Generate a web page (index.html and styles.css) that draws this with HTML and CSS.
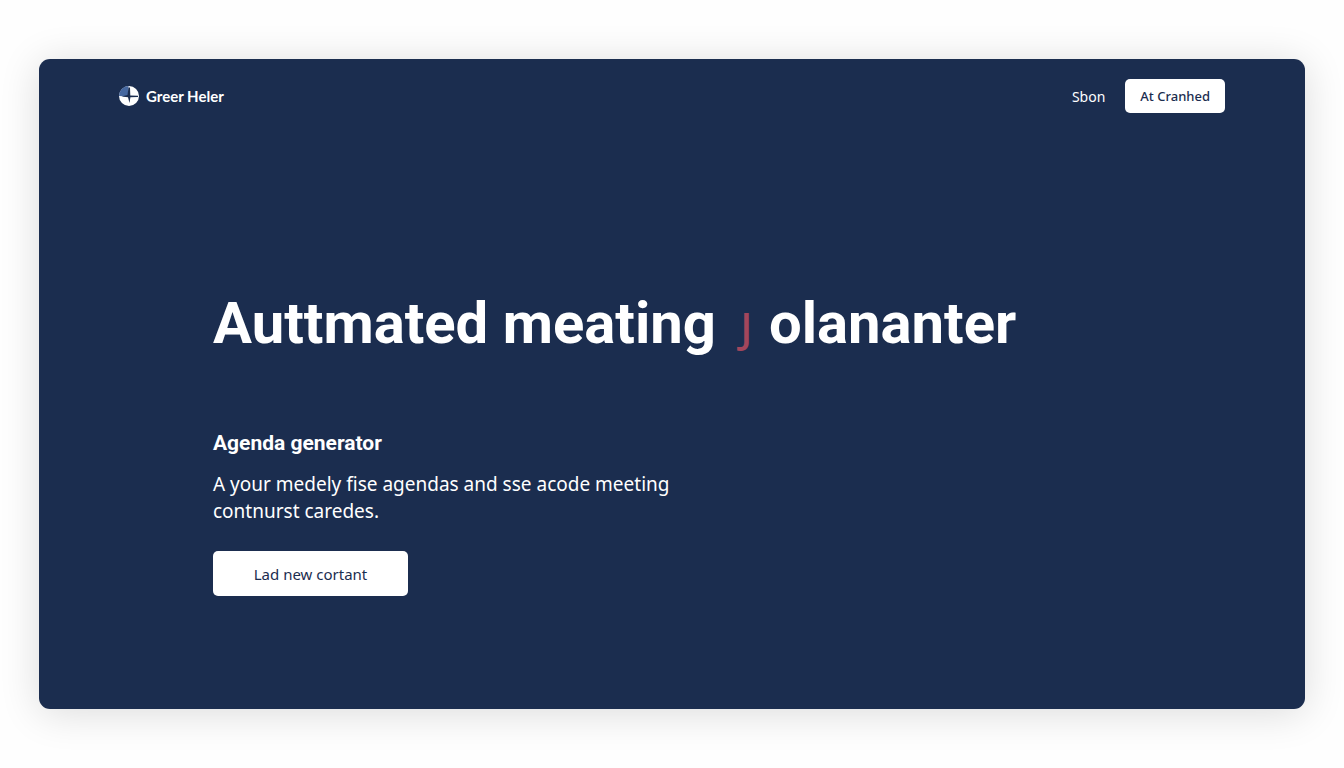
FILE: index.html
```
<!DOCTYPE html>
<html lang="en">
<head>
  <meta charset="UTF-8">
  <meta name="viewport" content="width=device-width, initial-scale=1.0">
  <title>Greer Heler</title>
  <link rel="stylesheet" href="styles.css">
</head>
<body>

  <div class="page-card">
    <header>
      <a class="logo" href="#">
        <svg class="logo-mark" viewBox="0 0 20 20" aria-hidden="true">
          <circle cx="10" cy="10" r="10" fill="#ffffff"/>
          <path d="M9.500 10.500V0A10 10 0 0 0 0 10Z" fill="#4668a0"/>
          <path d="M9.500 1.500 11 1.500 11.300 9.400 19 9.800V10.900L11.400 11.300 10.500 17 9 11.200 2.500 10.600 8.500 9Z" fill="#1b2d4f"/>
        </svg>
        <span>Greer Heler</span>
      </a>
      <nav>
        <a class="nav-link" href="#">Sbon</a>
        <button class="nav-button" type="button">At Cranhed</button>
      </nav>
    </header>

    <main>
      <h1>Auttmated meating <span class="accent">J</span> olananter</h1>
      <section class="feature">
        <h2>Agenda generator</h2>
        <p>A your medely fise agendas and sse acode meeting contnurst caredes.</p>
        <button class="main-button" type="button">Lad new cortant</button>
      </section>
    </main>
  </div>

</body>
</html>
```
FILE: styles.css
```
* {
  box-sizing: border-box;
}

body {
  margin: 0;
  min-height: 100vh;
  padding: 59px 39px;
  display: flex;
  background-color: #fefefe;
  font-family: "Noto Sans", "Open Sans", sans-serif;
  font-variant-ligatures: none;
  color: #ffffff;
}

.page-card {
  flex: 1;
  display: flex;
  flex-direction: column;
  background-color: #1b2d4f;
  border-radius: 11px;
  box-shadow: 0 4px 40px rgba(0, 0, 0, 0.14);
}

header {
  display: flex;
  justify-content: space-between;
  align-items: center;
  padding: 20px 80px;
}

.logo {
  display: flex;
  align-items: center;
  gap: 7px;
  font-family: Lato, sans-serif;
  font-size: 15px;
  font-weight: 700;
  color: #ffffff;
  text-decoration: none;
}

.logo-mark {
  width: 20px;
  height: 20px;
}

nav {
  display: flex;
  align-items: center;
  gap: 20px;
}

.nav-link {
  font-size: 14px;
  color: #ffffff;
  text-decoration: none;
}

button {
  border: none;
  border-radius: 5px;
  background-color: #ffffff;
  color: #1b2d4f;
  font-family: inherit;
  cursor: pointer;
}

.nav-button {
  height: 34px;
  padding: 0 15px;
  font-size: 13px;
  font-weight: 500;
}

main {
  padding: 150px 174px 60px;
}

h1 {
  margin: 0;
  font-family: Roboto, sans-serif;
  font-size: 58px;
  line-height: 80px;
  font-weight: 700;
}

.accent {
  padding: 0 2px 0 10px;
  font-family: "Noto Sans", sans-serif;
  font-size: 42px;
  font-weight: 500;
  color: #a3465c;
}

.feature {
  max-width: 480px;
  margin-top: 62px;
}

h2 {
  margin: 0;
  font-family: Roboto, sans-serif;
  font-size: 21px;
  line-height: 28px;
  font-weight: 700;
}

p {
  margin: 14px 0 26px;
  font-size: 19px;
  line-height: 27px;
}

.main-button {
  min-width: 195px;
  height: 45px;
  padding: 0 40px;
  font-size: 15px;
}
```
